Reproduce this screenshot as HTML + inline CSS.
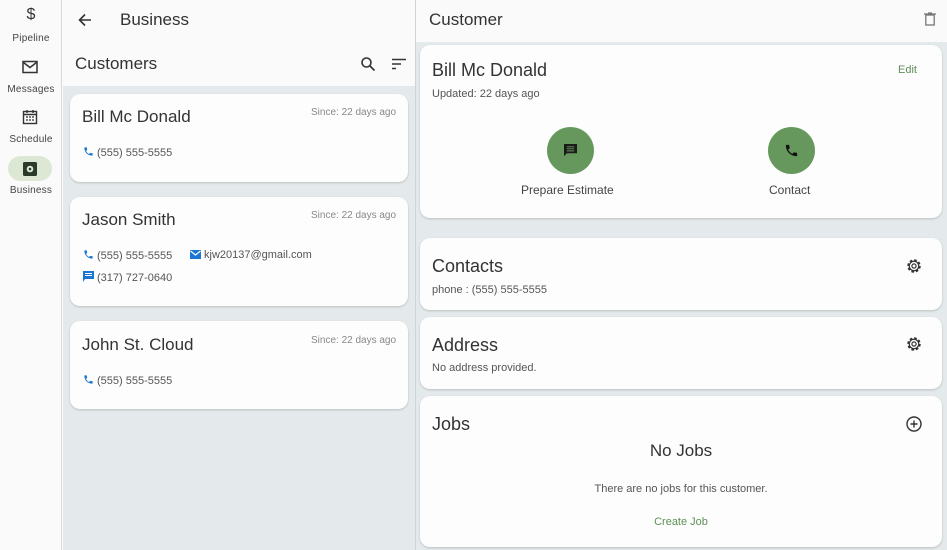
<!DOCTYPE html>
<html><head><meta charset="utf-8"><style>
*{box-sizing:border-box;margin:0;padding:0}
body{width:947px;height:550px;overflow:hidden;font-family:"Liberation Sans",sans-serif;background:#fafafa;position:relative;color:#1f2421}
.a{position:absolute}
.card{position:absolute;background:#fdfdfd;border-radius:10px;box-shadow:0 1px 2px rgba(0,0,0,.18)}
.nl{position:absolute;width:62px;text-align:center;font-size:10px;color:#444;letter-spacing:.2px}
.ph{width:11px;height:11px;vertical-align:-1px;margin-right:3px}
</style></head><body>
<svg width="0" height="0" style="position:absolute"><defs>
<symbol id="phone" viewBox="0 0 24 24"><path d="M6.62 10.79c1.44 2.83 3.76 5.14 6.59 6.59l2.2-2.2c.27-.27.67-.36 1.02-.24 1.12.37 2.33.57 3.57.57.55 0 1 .45 1 1V20c0 .55-.45 1-1 1-9.39 0-17-7.61-17-17 0-.55.45-1 1-1h3.5c.55 0 1 .45 1 1 0 1.25.2 2.45.57 3.57.11.35.03.74-.25 1.02l-2.2 2.2z"/></symbol>
<symbol id="gear" viewBox="0 0 24 24"><circle cx="12" cy="12" r="7" fill="none" stroke="#333" stroke-width="4" stroke-dasharray="3.1 2.4"/><circle cx="12" cy="12" r="6.3" fill="#fdfdfd" stroke="#333" stroke-width="1.6"/><circle cx="12" cy="12" r="2.8" fill="none" stroke="#333" stroke-width="1.6"/></symbol>
</defs></svg>
<!-- nav rail -->
<div class="a" style="left:0;top:0;width:62px;height:550px;background:#fafafa;border-right:1px solid #d5d9d9"></div>
<div class="nl" style="top:6px;font-size:16px;color:#333">$</div>
<div class="nl" style="top:33px">Pipeline</div>
<svg class="a" style="left:22px;top:60px" width="16" height="14" viewBox="0 0 16 14"><rect x="1" y="1.5" width="14" height="11" fill="none" stroke="#333" stroke-width="1.5"/><path d="M1.5 2.5 8 7.5 14.5 2.5" fill="none" stroke="#333" stroke-width="1.5"/></svg>
<div class="nl" style="top:84px">Messages</div>
<svg class="a" style="left:22px;top:109px" width="16" height="16" viewBox="0 0 16 16"><rect x="1.5" y="2.5" width="13" height="12" fill="none" stroke="#333" stroke-width="1.4"/><path d="M1.5 5.5h13M5 1v3M11 1v3" stroke="#333" stroke-width="1.4"/><path d="M4 8h2M7 8h2M10 8h2M4 11h2M7 11h2M10 11h2" stroke="#333" stroke-width="1.3"/></svg>
<div class="nl" style="top:134px">Schedule</div>
<div class="a" style="left:8px;top:156px;width:44px;height:25px;border-radius:13px;background:#dce8d3"></div>
<svg class="a" style="left:22px;top:161px" width="16" height="16" viewBox="0 0 16 16"><rect x="1" y="1" width="14" height="14" rx="1.5" fill="#2b3a2b"/><circle cx="8" cy="8" r="3.3" fill="#dce8d3"/><circle cx="8" cy="8" r="1.3" fill="#2b3a2b"/></svg>
<div class="nl" style="top:185px">Business</div>

<!-- list panel -->
<div class="a" style="left:63px;top:86px;width:352px;height:464px;background:#e4eaeb"></div>
<div class="a" style="left:415px;top:0;width:1px;height:550px;background:#cfd5d5"></div>
<svg class="a" style="left:77px;top:12px" width="16" height="16" viewBox="0 0 16 16"><path d="M14 8H3M8 2.5 2.5 8 8 13.5" fill="none" stroke="#333" stroke-width="1.6"/></svg>
<div class="a" style="left:120px;top:10px;font-size:17px;color:#333">Business</div>
<div class="a" style="left:75px;top:54px;font-size:17px;color:#333">Customers</div>
<svg class="a" style="left:360px;top:56px" width="16" height="16" viewBox="0 0 16 16"><circle cx="6.5" cy="6.5" r="4.5" fill="none" stroke="#333" stroke-width="1.6"/><path d="M10 10 14.5 14.5" stroke="#333" stroke-width="1.7"/></svg>
<svg class="a" style="left:391px;top:58px" width="16" height="12" viewBox="0 0 16 12"><path d="M1 1.5h14M1 6h9M1 10.5h4" stroke="#333" stroke-width="1.5"/></svg>

<div class="card" style="left:70px;top:94px;width:338px;height:88px"></div>
<div class="a" style="left:82px;top:107px;font-size:17px;color:#333">Bill Mc Donald</div>
<div class="a" style="left:311px;top:107px;font-size:10px;color:#888">Since: 22 days ago</div>
<div class="a" style="left:83px;top:146px;font-size:11px;color:#555"><svg class="ph" fill="#1976d2"><use href="#phone"/></svg>(555) 555-5555</div>

<div class="card" style="left:70px;top:197px;width:338px;height:109px"></div>
<div class="a" style="left:82px;top:210px;font-size:17px;color:#333">Jason Smith</div>
<div class="a" style="left:311px;top:210px;font-size:10px;color:#888">Since: 22 days ago</div>
<div class="a" style="left:83px;top:249px;font-size:11px;color:#555"><svg class="ph" fill="#1976d2"><use href="#phone"/></svg>(555) 555-5555</div>
<div class="a" style="left:190px;top:249px;font-size:11px;color:#555"><svg width="11" height="9" viewBox="0 0 11 9" style="vertical-align:-1px;margin-right:3px"><rect width="11" height="9" fill="#1976d2"/><path d="M.5 1 5.5 5 10.5 1" fill="none" stroke="#fff" stroke-width="1.2"/></svg>kjw20137@gmail.com</div>
<div class="a" style="left:83px;top:271px;font-size:11px;color:#555"><svg width="11" height="11" viewBox="0 0 11 11" style="vertical-align:-1px;margin-right:3px"><path d="M0 0h11v8H2L0 11z" fill="#1976d2"/><path d="M2 2.5h7M2 4.5h7" stroke="#fff" stroke-width="1"/></svg>(317) 727-0640</div>

<div class="card" style="left:70px;top:321px;width:338px;height:88px"></div>
<div class="a" style="left:82px;top:335px;font-size:17px;color:#333">John St. Cloud</div>
<div class="a" style="left:311px;top:335px;font-size:10px;color:#888">Since: 22 days ago</div>
<div class="a" style="left:83px;top:374px;font-size:11px;color:#555"><svg class="ph" fill="#1976d2"><use href="#phone"/></svg>(555) 555-5555</div>

<!-- right panel -->
<div class="a" style="left:416px;top:42px;width:531px;height:508px;background:#e4eaeb"></div>
<div class="a" style="left:429px;top:10px;font-size:17px;color:#333">Customer</div>
<svg class="a" style="left:924px;top:12px" width="12" height="14" viewBox="0 0 12 14"><path d="M0 2h12M4 1h4" stroke="#777" stroke-width="1.3"/><rect x="1.8" y="3" width="8.4" height="10" fill="none" stroke="#777" stroke-width="1.3"/></svg>

<div class="card" style="left:420px;top:45px;width:522px;height:173px"></div>
<div class="a" style="left:432px;top:60px;font-size:18px;color:#333">Bill Mc Donald</div>
<div class="a" style="left:432px;top:88px;font-size:11px;color:#555">Updated: 22 days ago</div>
<div class="a" style="left:898px;top:64px;font-size:11px;color:#5e8f57">Edit</div>
<div class="a" style="left:547px;top:127px;width:47px;height:47px;border-radius:50%;background:#66985d"></div>
<svg class="a" style="left:564px;top:144px" width="13" height="13" viewBox="0 0 14 14"><path d="M0 0h14v10H3L0 13z" fill="#1a1a1a"/><path d="M3 3h8M3 5.2h8M3 7.4h8" stroke="#66985d" stroke-width="1"/></svg>
<div class="a" style="left:521px;top:183px;font-size:12px;color:#444">Prepare Estimate</div>
<div class="a" style="left:768px;top:127px;width:47px;height:47px;border-radius:50%;background:#66985d"></div>
<svg class="a" style="left:784px;top:143px" width="15" height="15" fill="#111"><use href="#phone"/></svg>
<div class="a" style="left:769px;top:183px;font-size:12px;color:#444">Contact</div>

<div class="card" style="left:420px;top:238px;width:522px;height:72px"></div>
<div class="a" style="left:432px;top:256px;font-size:18px;color:#333">Contacts</div>
<div class="a" style="left:432px;top:284px;font-size:11px;color:#555">phone : (555) 555-5555</div>
<svg class="a" style="left:905px;top:257px" width="18" height="18"><use href="#gear"/></svg>

<div class="card" style="left:420px;top:317px;width:522px;height:72px"></div>
<div class="a" style="left:432px;top:335px;font-size:18px;color:#333">Address</div>
<div class="a" style="left:432px;top:362px;font-size:11px;color:#555">No address provided.</div>
<svg class="a" style="left:905px;top:335px" width="18" height="18"><use href="#gear"/></svg>

<div class="card" style="left:420px;top:396px;width:522px;height:151px"></div>
<div class="a" style="left:432px;top:414px;font-size:18px;color:#333">Jobs</div>
<svg class="a" style="left:906px;top:416px" width="16" height="16" viewBox="0 0 16 16"><circle cx="8" cy="8" r="7" fill="none" stroke="#333" stroke-width="1.4"/><path d="M8 4.5v7M4.5 8h7" stroke="#333" stroke-width="1.4"/></svg>
<div class="a" style="left:420px;width:522px;top:441px;text-align:center;font-size:17px;color:#333">No Jobs</div>
<div class="a" style="left:420px;width:522px;top:483px;text-align:center;font-size:11px;color:#555">There are no jobs for this customer.</div>
<div class="a" style="left:420px;width:522px;top:516px;text-align:center;font-size:11px;color:#5e8f57">Create Job</div>
</body></html>
